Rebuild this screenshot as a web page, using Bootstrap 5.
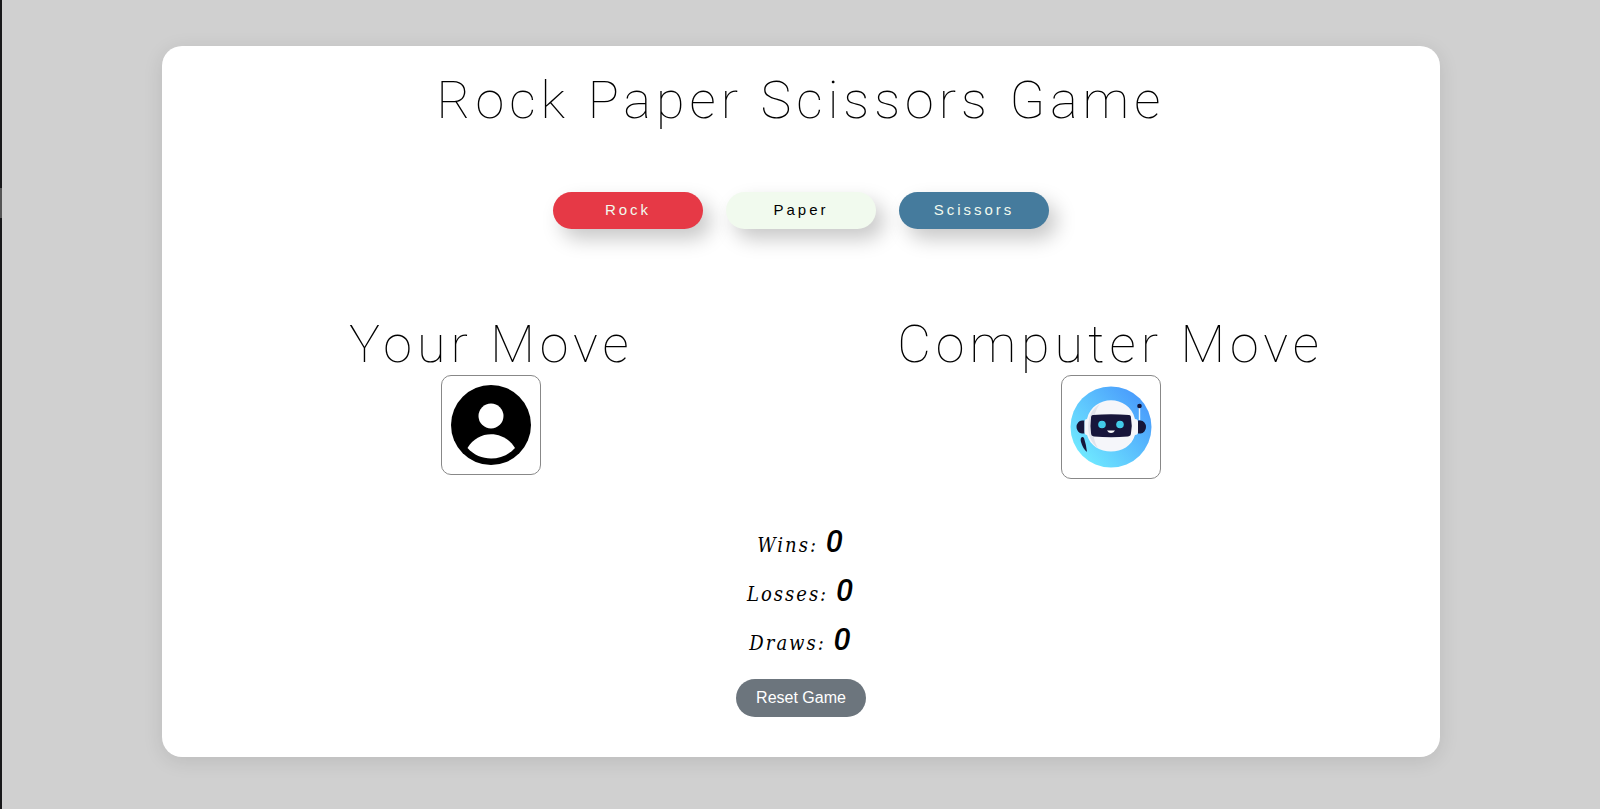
<!DOCTYPE html>
<html lang="en">
<head>
<meta charset="utf-8">
<meta name="viewport" content="width=device-width, initial-scale=1">
<title>Rock Paper Scissors Game</title>
<link href="https://cdn.jsdelivr.net/npm/bootstrap@5.3.0/dist/css/bootstrap.min.css" rel="stylesheet">
<style>
body{background:#d0d0d0;color:#000;font-family:"Liberation Sans",Arial,sans-serif}
.edge{width:2px;background:linear-gradient(#18181a 188px,#555 188px 218px,#18181a 218px)}
.stage{padding:46px 0 52px}
.game{width:80%;padding:25px 20px 40px;border-radius:20px;box-shadow:0 4px 20px rgba(0,0,0,.1)}
.title{font:100 52px/60px "Roboto Slab",Roboto,sans-serif;letter-spacing:5px}
.moves{margin:61px 0 86px;gap:23px}
.move{width:150px;height:37px;border:0;border-radius:20px;font-size:15px;letter-spacing:3px;box-shadow:8px 10px 20px rgba(0,0,0,.22)}
.rock{background:#e63946;color:#f1faee}
.paper{background:#f1faee;color:#000}
.scissors{background:#457b9d;color:#f1faee}
.pick{width:100px;border:1px solid #888;border-radius:10px}
.scores{margin:39px 0 14px;font:italic 400 20px/49px "Roboto Slab","DejaVu Serif Condensed","DejaVu Serif",serif;letter-spacing:2px}
.scores p{height:49px}
.scores strong{font:italic 500 31px/48px "Roboto Slab",Roboto,sans-serif}
.reset{width:130px;height:38px;border:0;border-radius:20px;background:#6c757d;color:#fff;font-size:16px}
</style>
</head>
<body>
<div class="d-flex min-vh-100">
<div class="edge"></div>
<main class="stage flex-grow-1 d-flex align-items-start justify-content-center">
<section class="game bg-white text-center">
<h1 class="title m-0">Rock Paper Scissors Game</h1>
<div class="moves d-flex flex-wrap justify-content-center">
<button type="button" class="move rock">Rock</button>
<button type="button" class="move paper">Paper</button>
<button type="button" class="move scissors">Scissors</button>
</div>
<div class="row g-0">
<div class="col-6">
<h2 class="title m-0">Your Move</h2>
<svg class="pick" viewBox="0 0 98 98" role="img" aria-label="Player">
<circle cx="49" cy="49" r="40"/>
<circle cx="49" cy="40" r="12.500" fill="#fff"/>
<path d="M25.500 72C36 53.500 62 53.500 73 72C60 86 38 86 25.500 72Z" fill="#fff"/>
</svg>
</div>
<div class="col-6">
<h2 class="title m-0">Computer Move</h2>
<svg class="pick" viewBox="0 0 98 102" role="img" aria-label="Computer">
<defs><linearGradient id="sky" x1="0.100" y1="0.900" x2="0.900" y2="0.200"><stop offset="0" stop-color="#71ecff"/><stop offset="1" stop-color="#4a9dfc"/></linearGradient></defs>
<circle cx="49" cy="51" r="40.500" fill="url(#sky)"/>
<path d="M77.500 31V44" stroke="#e8f5ff" stroke-width="1.400"/>
<circle cx="77.500" cy="30" r="2.300" fill="#16163a"/>
<path d="M22.500 44.500H20a5.500 6.500 0 0 0 0 13H22.500ZM76 44.500h2.500a5.500 6.500 0 0 1 0 13H76Z" fill="#16163a"/>
<path d="M25 43C31 18 67 18 73 43q3 0 3 3V56q0 3-3 3C67 81 31 81 25 59q-2.500 0-2.500-3V46q0-3 2.500-3Z" fill="#f5f6fa"/>
<path d="M38 28C23 36 22 62 36 72C29 61 29 39 38 28Z" fill="#e2e4ec"/>
<path d="M31 39Q49 37.500 67 39Q69 39 69 42Q70.500 50 69 57Q69 60 66 60.500Q49 62 32 60.500Q29 60 29 57Q28 50 29 42Q29 39 31 39Z" fill="#17163b"/>
<circle cx="40" cy="48.500" r="3.800" fill="#42cbe9"/><circle cx="58" cy="48.500" r="3.800" fill="#42cbe9"/>
<path d="M45 54.500H53Q51.500 57 49 57Q46.500 57 45 54.500Z" fill="#fff"/>
<path d="M20 61Q18 62 19 66Q21 73 25 76Q24 68 22 62Q21 60.500 20 61Z" fill="#16163a"/>
</svg>
</div>
</div>
<div class="scores">
<p class="m-0">Wins: <strong>0</strong></p>
<p class="m-0">Losses: <strong>0</strong></p>
<p class="m-0">Draws: <strong>0</strong></p>
</div>
<button type="button" class="reset">Reset Game</button>
</section>
</main>
</div>
<script src="https://cdn.jsdelivr.net/npm/bootstrap@5.3.0/dist/js/bootstrap.bundle.min.js"></script>
</body>
</html>
